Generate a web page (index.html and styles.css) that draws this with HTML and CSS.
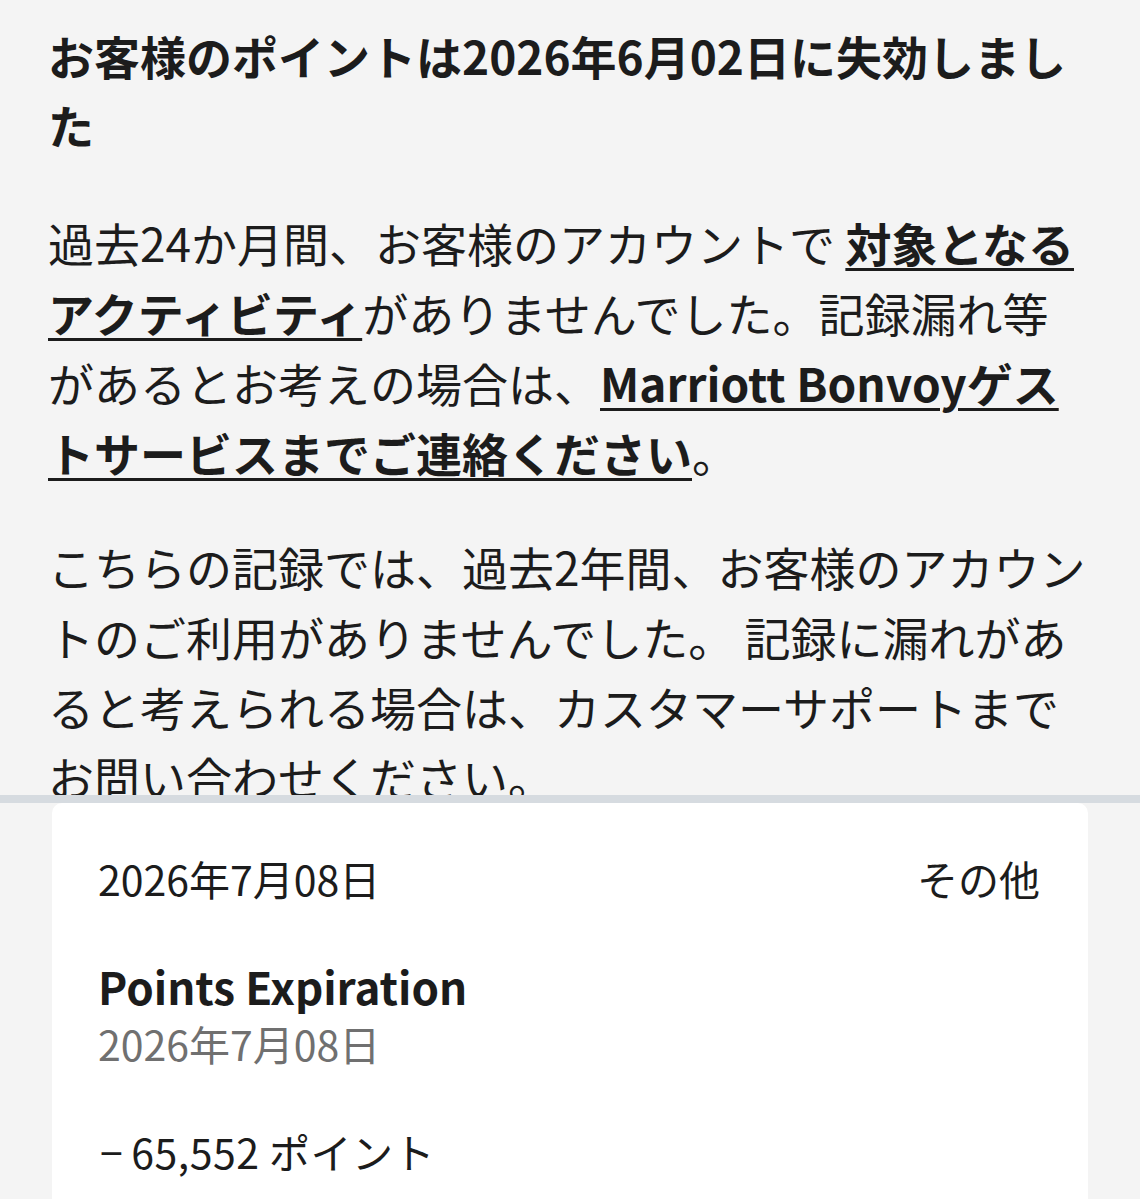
FILE: index.html
```html
<!DOCTYPE html>
<html lang="ja">
<head>
  <meta charset="UTF-8">
  <meta name="viewport" content="width=device-width, initial-scale=1.0">
  <title>ポイント履歴</title>
  <link rel="stylesheet" href="styles.css">
</head>
<body>
  <div class="notice">
    <h2 class="notice-title">お客様のポイントは2026年6月02日に失効しました</h2>
    <p>過去24か月間、お客様のアカウントで <a href="#" class="link">対象となるアクティビティ</a>がありませんでした。記録漏れ等があるとお考えの場合は、<a href="#" class="link">Marriott Bonvoyゲストサービスまでご連絡ください</a>。</p>
    <p>こちらの記録では、過去2年間、お客様のアカウントのご利用がありませんでした。 記録に漏れがあると考えられる場合は、カスタマーサポートまでお問い合わせください。</p>
  </div>

  <div class="history">
    <div class="card">
      <div class="card-head">
        <span>2026年7月08日</span>
        <span>その他</span>
      </div>
      <div class="card-title">Points Expiration</div>
      <div class="card-date">2026年7月08日</div>
      <div class="card-points"><span class="sign">−</span>65,552 ポイント</div>
    </div>
  </div>
</body>
</html>
```

FILE: styles.css
```css
body {
  font-family: "Noto Sans CJK JP", "Noto Sans", sans-serif;
  margin: 0;
  background: #f4f4f4;
  color: #1c1c1c;
  height: 1199px;
  overflow: hidden;
}

.notice {
  height: 774px;
  padding: 21px 48px 0;
  overflow: hidden;
  border-bottom: 8px solid #d6dbe0;
}

.notice-title {
  margin: 0 0 48px;
  font-size: 46px;
  font-weight: 700;
  line-height: 69px;
}

.notice p {
  margin: 0 0 44px;
  font-size: 46px;
  line-height: 70px;
}

.link {
  color: inherit;
  font-weight: 700;
  text-decoration: underline;
  text-decoration-thickness: 3px;
  text-underline-offset: 6px;
}

.history {
  padding: 0 52px;
}

.card {
  background: #fff;
  border-radius: 10px 10px 0 0;
  padding: 48px 48px 40px 46px;
}

.card-head {
  display: flex;
  justify-content: space-between;
  font-size: 41px;
  line-height: 54px;
}

.card-title {
  margin-top: 51px;
  font-size: 44px;
  font-weight: 700;
  line-height: 60px;
}

.card-date {
  font-size: 41px;
  line-height: 54px;
  color: #707070;
}

.card-points {
  margin-top: 54px;
  font-size: 41px;
  line-height: 54px;
  padding-left: 2px;
  letter-spacing: 0.5px;
}

.card-points .sign {
  margin-right: 8px;
}
```
